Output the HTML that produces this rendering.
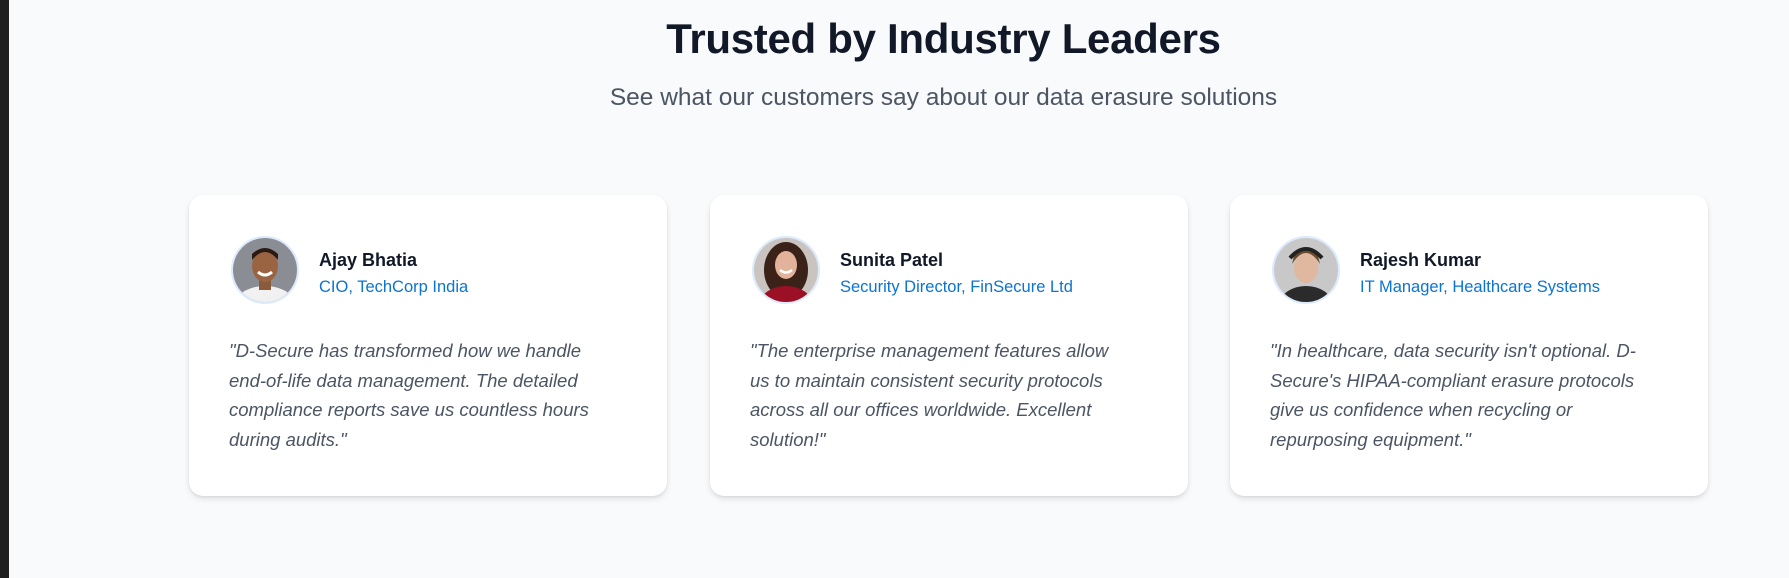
<!DOCTYPE html>
<html><head><meta charset="utf-8"><style>
html,body{margin:0;padding:0}
body{width:1789px;height:578px;background:#f9fafb;position:relative;overflow:hidden;font-family:"Liberation Sans",sans-serif}
.strip{position:absolute;left:0;top:0;width:9px;height:578px;background:#1f1f1f}
h1{position:absolute;left:98px;right:0;top:15px;margin:0;text-align:center;font-size:42px;font-weight:700;color:#111827;letter-spacing:-0.3px}
.sub{position:absolute;left:98px;right:0;top:84px;text-align:center;font-size:24.5px;color:#4b5563}
.card{position:absolute;top:195px;width:478px;height:301px;background:#fff;border-radius:14px;box-shadow:0 3px 6px rgba(0,0,0,0.10),0 1px 2px rgba(0,0,0,0.06)}
.av{position:absolute;left:42px;top:41px;width:64px;height:64px;border-radius:50%;border:2px solid #dbeafe;overflow:hidden}
.name{position:absolute;left:130px;top:55px;font-size:18px;font-weight:700;color:#111827}
.role{position:absolute;left:130px;top:83px;font-size:16.5px;color:#0b74d0}
.q{position:absolute;left:40px;top:141px;font-size:18.5px;line-height:29.7px;font-style:italic;color:#4b5563;white-space:nowrap}
</style></head><body>
<div class="strip"></div>
<h1>Trusted by Industry Leaders</h1>
<div class="sub">See what our customers say about our data erasure solutions</div>

<div class="card" style="left:189px">
 <div class="av"><svg width="64" height="64"><rect width="64" height="64" fill="#8a8e94"/><ellipse cx="32" cy="64" rx="28" ry="16" fill="#f1f1f1"/><rect x="26" y="40" width="12" height="12" fill="#8a5a3c"/><ellipse cx="32" cy="28" rx="13" ry="16" fill="#9a6442"/><path d="M19 22 Q32 6 45 22 L45 16 Q32 4 19 16Z" fill="#2a1a12"/><path d="M25 34 Q32 40 39 34" stroke="#fff" stroke-width="3" fill="none"/></svg></div>
 <div class="name">Ajay Bhatia</div>
 <div class="role">CIO, TechCorp India</div>
 <div class="q">"D-Secure has transformed how we handle<br>end-of-life data management. The detailed<br>compliance reports save us countless hours<br>during audits."</div>
</div>

<div class="card" style="left:710px">
 <div class="av"><svg width="64" height="64"><rect width="64" height="64" fill="#c9c4c0"/><ellipse cx="32" cy="32" rx="22" ry="28" fill="#3a2218"/><ellipse cx="32" cy="66" rx="26" ry="18" fill="#9b1024"/><ellipse cx="32" cy="27" rx="11" ry="14" fill="#e2b39a"/><path d="M26 32 Q32 37 38 32" stroke="#fff" stroke-width="2.5" fill="none"/></svg></div>
 <div class="name">Sunita Patel</div>
 <div class="role">Security Director, FinSecure Ltd</div>
 <div class="q">"The enterprise management features allow<br>us to maintain consistent security protocols<br>across all our offices worldwide. Excellent<br>solution!"</div>
</div>

<div class="card" style="left:1230px">
 <div class="av"><svg width="64" height="64"><rect width="64" height="64" fill="#c8c8c8"/><ellipse cx="32" cy="66" rx="26" ry="18" fill="#2b2b2b"/><ellipse cx="32" cy="30" rx="12" ry="15" fill="#e0b8a0"/><path d="M18 26 Q32 4 46 26 L44 18 Q32 8 20 18Z" fill="#6b4a2a"/><path d="M16 20 Q32 2 48 20" stroke="#222" stroke-width="4" fill="none"/></svg></div>
 <div class="name">Rajesh Kumar</div>
 <div class="role">IT Manager, Healthcare Systems</div>
 <div class="q">"In healthcare, data security isn't optional. D-<br>Secure's HIPAA-compliant erasure protocols<br>give us confidence when recycling or<br>repurposing equipment."</div>
</div>
</body></html>
